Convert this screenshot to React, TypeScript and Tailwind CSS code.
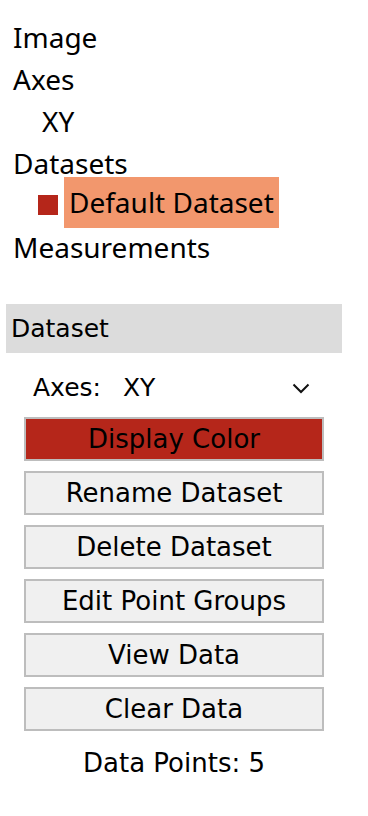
const tree = "font-['Noto_Sans',sans-serif] text-[28px] text-black";
const panel = "font-['DejaVu_Sans','Verdana',sans-serif] text-black";

const buttons = ["Rename Dataset", "Delete Dataset", "Edit Point Groups", "View Data", "Clear Data"];

function TreeRow({ indent, children }: { indent?: boolean; children: React.ReactNode }) {
  return (
    <div className={`flex h-[42px] items-center ${indent ? "pl-[42px]" : "pl-[13px]"}`}>{children}</div>
  );
}

export default function App() {
  return (
    <div className="min-h-screen w-[368px] bg-white">
      <div className={`${tree} pt-[16px]`}>
        <TreeRow>Image</TreeRow>
        <TreeRow>Axes</TreeRow>
        <TreeRow indent>XY</TreeRow>
        <TreeRow>Datasets</TreeRow>
        <div className="flex h-[42px] items-center pl-[38px]">
          <span className="h-[20px] w-[20px] bg-[#b5261a]" />
          <span className="ml-[6px] -mt-[6px] flex h-[51px] items-center bg-[#f2976d] px-[5px]">Default Dataset</span>
        </div>
        <TreeRow>Measurements</TreeRow>
      </div>

      <div className={`${panel} mx-[6px] mt-[36px] w-[336px]`}>
        <div className="flex h-[49px] items-center bg-[#dcdcdc] pl-[5px] text-[25px]">Dataset</div>

        <div className="mt-[21px] flex h-[28px] items-center pl-[27px] text-[25px]">
          <span>Axes:</span>
          <div className="ml-[22px] flex w-[178px] items-center justify-between">
            <span>XY</span>
            <svg width="18" height="11" viewBox="0 0 18 11" fill="none" className="mr-[-9px]">
              <path d="M1.5 1.5 L9 9 L16.5 1.5" stroke="#111" strokeWidth="2" />
            </svg>
          </div>
        </div>

        <div className="mt-[15px] flex flex-col items-center gap-[10px] text-[26px]">
          <button className="flex h-[44px] w-[300px] items-center justify-center border-2 border-[#bdbdbd] bg-[#b5261a] leading-none">
            Display Color
          </button>
          {buttons.map((b) => (
            <button
              key={b}
              className="flex h-[44px] w-[300px] items-center justify-center border-2 border-[#bdbdbd] bg-[#f0f0f0] leading-none"
            >
              {b}
            </button>
          ))}
        </div>

        <div className="mt-[13px] text-center text-[26px]">Data Points: 5</div>
      </div>
    </div>
  );
}
